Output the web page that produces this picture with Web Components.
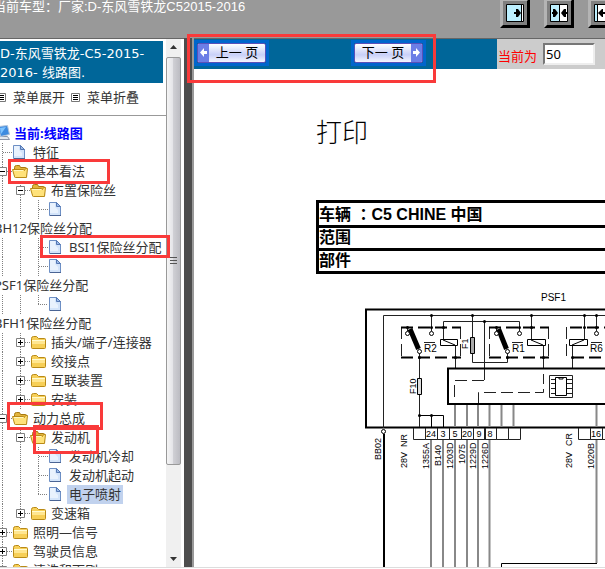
<!DOCTYPE html>
<html lang="zh-CN">
<head>
<meta charset="utf-8">
<title>线路图</title>
<style>
  html, body {
    margin: 0;
    height: 100%;
    overflow: hidden;
    background: #fff;
    font-family: "Noto Sans", "Noto Sans CJK SC", sans-serif;
    font-size: 13px;
    color: #333;
  }
</style>
</head>
<body>
<manual-app>
  <top-bar slot="top">当前车型：厂家:D-东风雪铁龙C52015-2016</top-bar>
  <side-menu slot="side">D-东风雪铁龙-C5-2015-2016- 线路图.</side-menu>
  <manual-page slot="main"></manual-page>
</manual-app>

<script>
class ManualApp extends HTMLElement {
    constructor() {
        super();
        this.attachShadow({mode: 'open'}).innerHTML = `
            <style>
              :host {
                position: relative;
                display: grid;
                grid-template: 39px minmax(0, 1fr) / 184px 10px minmax(0, 1fr);
                height: calc(100vh - 2px);
                border-bottom: 1px solid #ddd;
                overflow: hidden;
              }
              .top {
                grid-column: 1 / -1;
                min-width: 0;
              }
              .divider {
                background: #4d4d4d;
                border-right: 2px solid #999;
                margin-top: -1px;
              }
              .side, .main {
                min-width: 0;
                min-height: 0;
                overflow: hidden;
                display: grid;
              }
            </style>
            <div class="top"><slot name="top"></slot></div>
            <div class="side"><slot name="side"></slot></div>
            <div class="divider"></div>
            <div class="main"><slot name="main"></slot></div>
            <mark-box x="187" y="34" w="249" h="49"></mark-box>
            <mark-box x="8" y="159" w="102" h="25"></mark-box>
            <mark-box x="40" y="235" w="130" h="23"></mark-box>
            <mark-box x="7" y="402" w="96" h="28"></mark-box>
            <mark-box x="33" y="425" w="66" h="29"></mark-box>
        `;
    }
}

// red frame drawn over the page
class MarkBox extends HTMLElement {
    connectedCallback() {
        const get = name => this.getAttribute(name);
        this.attachShadow({mode: 'open'}).innerHTML = `
            <style>
              :host {
                position: absolute;
                left: ${get('x')}px;
                top: ${get('y')}px;
                width: ${get('w')}px;
                height: ${get('h')}px;
                box-sizing: border-box;
                border: 3px solid #f93a3a;
                pointer-events: none;
              }
            </style>
        `;
    }
}

class TopBar extends HTMLElement {
    constructor() {
        super();
        this.attachShadow({mode: 'open'}).innerHTML = `
            <style>
              :host {
                display: flex;
                justify-content: space-between;
                height: 38px;
                background: #999;
                border-bottom: 1px solid #666;
                color: #fff;
                font-family: "Liberation Sans", "Noto Sans CJK SC", sans-serif;
                overflow: hidden;
              }
              .car {
                margin-left: -7px;
                line-height: 14px;
                white-space: nowrap;
              }
              .tools {
                display: flex;
                gap: 14px;
                margin: -2px -13px 0 0;
              }
              button {
                width: 30px;
                height: 30px;
                padding: 0;
                border: 3px solid;
                border-color: #b4b4b4 #000 #000 #b4b4b4;
                background: #808080;
                display: grid;
                place-items: center;
              }
              svg { display: block; }
            </style>
            <span class="car"><slot></slot></span>
            <div class="tools">
              <button aria-label="左">
                <svg width="18" height="18"><path fill="#fff" stroke="#000" d="M.5.5h17v17H.5z"/><path fill="#bdf0ff" d="M1 1h14v16H1z"/><path stroke="#000" d="M15.500 1v16"/><path d="M8 8h2V5h2l3 4-3 4h-2v-3H8z"/></svg>
              </button>
              <button aria-label="中">
                <svg width="18" height="18"><path fill="#fff" stroke="#000" d="M.5.5h17v17H.5z"/><path fill="#bdf0ff" d="M1 1h8v16H1z"/><path stroke="#000" d="M9.500 1v16"/><path d="M2 8h1V5h2l3 4-3 4H3v-3H2zM17 8h-1V5h-2l-3 4 3 4h2v-3h1z"/></svg>
              </button>
              <button aria-label="右">
                <svg width="18" height="18"><path fill="#fff" stroke="#000" d="M.5.5h17v17H.5z"/><path fill="#bdf0ff" d="M1 1h2v16H1z"/><path stroke="#000" d="M3.500 1v16"/><path d="M4 9l4-4h1v3h2v2H9v3H8z"/></svg>
              </button>
            </div>
        `;
    }
}

const ICONS = {
    folder: `<svg width="18" height="19"><path fill="#f7cf57" stroke="#b98a17" d="M1.500 5.500q0-2 2-2h3l2 2h6q1 0 1 1v8q0 1-1 1h-12q-1 0-1-1z"/><path fill="#ffe690" d="M2 7h13v4H2z"/><path fill="#fffbd0" d="M2 7h13v1H2z"/></svg>`,
    open: `<svg width="18" height="19"><path fill="#e3b43c" stroke="#a87a10" d="M2.500 14.500v-9q0-2 2-2h3l1 2h5q1 0 1 1v8z"/><path fill="#ffe27a" stroke="#b98a17" d="M.5 7.500h11l1 1 1-2h2l-1 9h-11q-1 0-1-1z"/><path fill="#fff7c0" d="M2 8h9v1H2z"/></svg>`,
    doc: `<svg width="18" height="19"><path fill="#d3e4fa" stroke="#6d8fc4" d="M1.500 2.500h7l4 4v9h-11z"/><path fill="#fff" d="M2 3h5v4l3 3v3H2z" opacity=".5"/><path fill="#9dbce8" stroke="#5578b4" d="M8.500 2.500v4h4z"/><path stroke="#4a6494" d="M2 15.500h11"/></svg>`,
    computer: `<svg width="18" height="19"><path fill="#e4e8ee" stroke="#8b95a8" d="M3.500 14.500l2-2h8l2 3H4z"/><path fill="#3d8be0" stroke="#b7c7dc" d="M4.500 2.500l9-1 2 9-9 2z"/><path fill="#7fc4ff" d="M6 4l6-1-5 7z"/></svg>`
};

// guide cells: | line, T branch, L last branch, + closed node, - open node
const GUIDES = {
    '|': 'M8.500 0V19',
    'T': 'M8.500 0V19M9 9.500H18',
    'L': 'M8.500 0V9M8 9.500H18',
    '+': 'M8.500 0V19M9 9.500H18',
    '-': 'M8.500 0V19M9 9.500H18'
};

class TreeRow extends HTMLElement {
    connectedCallback() {
        const guides = this.getAttribute('guides') || '';
        const icon = this.getAttribute('icon');
        let cells = '';
        for (const g of guides) {
            let box = '';
            if (g === '+' || g === '-') {
                box = `<path fill="#fff" stroke="#808080" d="M4.500 5.500h8v8h-8z"/><path stroke="#000" d="M6 9.500h5${g === '+' ? 'M8.500 7v5' : ''}"/>`;
            }
            cells += `<svg width="18" height="19"><path stroke="#808080" stroke-dasharray="1 1" fill="none" d="${GUIDES[g]}"/>${box}</svg>`;
        }
        this.attachShadow({mode: 'open'}).innerHTML = `
            <style>
              :host {
                display: flex;
                height: 19px;
                line-height: 19px;
                white-space: nowrap;
              }
              svg { display: block; flex: none; }
              a {
                color: inherit;
                text-decoration: none;
                padding: 0 2px;
                margin-left: 1px;
              }
              :host([icon="computer"]) { color: #00f; font-weight: bold; }
              :host([icon="computer"]) a { margin-left: 0; }
              :host(:not([icon])) a { padding: 0; margin: 0; }
              :host([selected]) a { background: #c1d2ee; }
            </style>
            ${cells}${icon ? ICONS[icon] : ''}<a href="#"><slot></slot></a>
        `;
    }
}

const ROWS = [
    ['', 'computer', '当前:线路图'],
    ['T', 'doc', '特征'],
    ['-', 'open', '基本看法'],
    ['|-', 'open', '布置保险丝'],
    ['||T', 'doc', ''],
    ['', '', 'BH12保险丝分配'],
    ['||T', 'doc', 'BSI1保险丝分配'],
    ['||T', 'doc', ''],
    ['', '', 'PSF1保险丝分配'],
    ['||L', 'doc', ''],
    ['', '', 'BFH1保险丝分配'],
    ['|+', 'folder', '插头/端子/连接器'],
    ['|+', 'folder', '绞接点'],
    ['|+', 'folder', '互联装置'],
    ['|+', 'folder', '安装'],
    ['-', 'open', '动力总成'],
    ['|-', 'open', '发动机'],
    ['||T', 'doc', '发动机冷却'],
    ['||T', 'doc', '发动机起动'],
    ['||L', 'doc', '电子喷射', 'selected'],
    ['|+', 'folder', '变速箱'],
    ['+', 'folder', '照明—信号'],
    ['+', 'folder', '驾驶员信息'],
    ['+', 'folder', '清洗和雨刷']
];

class SideMenu extends HTMLElement {
    constructor() {
        super();
        const rows = ROWS.map(([guides, icon, label, state]) =>
            `<tree-row guides="${guides}" ${icon ? `icon="${icon}"` : ''} ${state || ''}>${label}</tree-row>`).join('');
        const list = `<svg width="9" height="9"><path fill="#fff" stroke="#777" d="M.5.5h8v8h-8z"/><path stroke="#000" d="M2 2.500h5M2 4.500h5M2 6.500h5"/></svg>`;
        this.attachShadow({mode: 'open'}).innerHTML = `
            <style>
              :host {
                display: grid;
                grid-template-columns: minmax(0, 1fr) 15px;
                padding-right: 3px;
                min-height: 0;
                overflow: hidden;
              }
              .pane {
                min-width: 0;
                overflow: hidden;
              }
              h1 {
                margin: 2px 3px 0 0;
                padding: 3px 0 1px;
                background: #069;
                color: #fff;
                font: 13px/19px "DejaVu Sans", "Noto Sans CJK SC", sans-serif;
              }
              .menu {
                display: flex;
                align-items: center;
                gap: 6px;
                margin-left: -3px;
                height: 28px;
                padding-bottom: 4px;
                border-bottom: 1px solid #999;
              }
              .menu a {
                display: flex;
                align-items: center;
                gap: 7px;
                color: inherit;
                text-decoration: none;
                line-height: 19px;
              }
              nav {
                margin: 8px 0 0 -6px;
              }
              .scroll {
                display: grid;
                grid-template-rows: 18px minmax(0, 4fr) minmax(0, 1fr);
                background: #f0f0f0;
              }
              .scroll svg { display: block; margin: 6px auto 0; }
              .thumb {
                display: grid;
                place-items: center;
                border: 1px solid #999;
                border-radius: 2px;
                background: linear-gradient(90deg, #f5f5f5, #e4e4e8 45%, #cfcfd4 50%, #bcbcc2);
              }
              .thumb svg { margin: 0; }
              .rest {
                display: flex;
                align-items: flex-end;
              }
              .rest svg { margin-bottom: 6px; }
            </style>
            <div class="pane">
              <h1><slot></slot></h1>
              <div class="menu"><a href="#">${list}菜单展开</a><a href="#">${list}菜单折叠</a></div>
              <nav>${rows}</nav>
            </div>
            <div class="scroll">
              <svg width="7" height="4"><path fill="#333" d="M0 4l3.500-4L7 4z"/></svg>
              <div class="thumb"><svg width="7" height="8"><path stroke="#555" d="M0 .5h7M0 3.500h7M0 6.500h7"/></svg></div>
              <div class="rest"><svg width="7" height="4"><path fill="#333" d="M0 0l3.500 4L7 0z"/></svg></div>
            </div>
        `;
    }
}

class PageButton extends HTMLElement {
    connectedCallback() {
        const next = this.hasAttribute('next');
        const arrow = next ? 'M2 7h3V4l4 4.500L5 13v-3H2z' : 'M9 7H6V4L2 8.500 6 13v-3h3z';
        this.attachShadow({mode: 'open'}).innerHTML = `
            <style>
              :host {
                display: block;
                border: 3px solid #06c;
              }
              button {
                display: flex;
                flex-direction: ${next ? 'row-reverse' : 'row'};
                width: 69px;
                height: 20px;
                padding: 0;
                border: 1px solid #5a50b8;
                border-radius: 2px;
                background: linear-gradient(#fff, #c9d0f8 60%, #f4f6ff);
                font: 13px/18px "Liberation Sans", "Noto Sans CJK SC", sans-serif;
                color: #000;
                overflow: hidden;
              }
              svg { background: #6c7ee6; flex: none; }
              span { flex: 1; white-space: nowrap; }
            </style>
            <button><svg width="11" height="18"><path fill="#fff" d="${arrow}"/></svg><span><slot></slot></span></button>
        `;
    }
}

class ManualPage extends HTMLElement {
    constructor() {
        super();
        this.attachShadow({mode: 'open'}).innerHTML = `
            <style>
              :host {
                display: block;
                overflow: hidden;
                color: #000;
              }
              .bar {
                display: flex;
                height: 30px;
                background: #069;
              }
              .pages {
                flex: 1;
                display: flex;
                align-items: flex-start;
                gap: 82px;
                padding-top: 1px;
              }
              .current {
                display: flex;
                align-items: center;
                gap: 6px;
                width: 108px;
                box-sizing: border-box;
                padding-left: 1px;
                background: #ccc;
              }
              label {
                color: #f00;
                line-height: 30px;
                padding-top: 3px;
              }
              input {
                width: 52px;
                height: 22px;
                box-sizing: border-box;
                padding: 0 1px;
                border: 2px solid;
                border-color: #777 #eee #eee #777;
                border-radius: 0;
                background: #fff;
                font: 13px "Noto Sans", sans-serif;
                color: #000;
              }
              article {
                margin: 42px 0 0 122px;
              }
              h2 {
                margin: 0;
                font: 300 26px/40px "Noto Sans CJK SC", sans-serif;
              }
              table {
                width: 110%;
                margin-top: 49px;
                border-collapse: collapse;
                font: bold 16px/20px "Liberation Sans", "Noto Sans CJK SC", sans-serif;
              }
              td {
                height: 20px;
                padding: 0;
                border: 3px solid #000;
                white-space: nowrap;
              }
              .colon { font-family: "Noto Sans CJK TC", sans-serif; }
              wiring-diagram { margin-top: 12px; }
            </style>
            <div class="bar">
              <div class="pages">
                <page-button>上一 页</page-button>
                <page-button next>下一 页</page-button>
              </div>
              <div class="current">
                <label for="page">当前为</label>
                <input id="page" value="50">
              </div>
            </div>
            <article>
              <h2>打印</h2>
              <table>
                <tr><td>车辆 <span class="colon" lang="zh-TW">：</span>C5 CHINE 中国</td></tr>
                <tr><td>范围</td></tr>
                <tr><td>部件</td></tr>
              </table>
              <wiring-diagram></wiring-diagram>
            </article>
        `;
    }
}

class WiringDiagram extends HTMLElement {
    constructor() {
        super();
        const dots = [[431,314],[472,314],[531,314],[584,314],[596,314],[484,320],[407,326],[431,326],[443,326],
            [496,326],[519,326],[531,326],[584,326],[596,326],[419,356],[455,356],[507,356],[543,356],[572,356],
            [419,414],[431,414]].map(([x, y]) => `<circle cx="${x}.5" cy="${y}.5" r="1.500"/>`).join('');
        const rings = [[407,332],[431,332],[419,350],[496,332],[519,332],[507,350],[596,332],[383,430]]
            .map(([x, y]) => `<circle cx="${x}.5" cy="${y}.5" r="2"/>`).join('');
        const pins = [[413,''],[425,'24'],[437,'3'],[449,'5'],[461,'20'],[473,'9'],[484,'8'],[496,''],[508,''],[578,''],[590,'16'],[602,'']]
            .map(([x, t]) => `<path class="l" fill="#fff" d="M${x}.5 427v11.500h12V427"/><text x="${x + 6}" y="436" text-anchor="middle">${t}</text>`).join('');
        const wires = [[381,459,'BB02'],[407,467,'28V'],[407,446,'NR'],[429,468,'1355A'],[441,465,'B140'],[453,468,'1203D'],
            [465,463,'1075'],[476,468,'1229D'],[488,468,'1226D'],[572,467,'28V'],[572,445,'CR'],[594,468,'1020B'],
            [416,393,'F10'],[468,348,'F1']]
            .map(([x, y, t]) => `<text transform="translate(${x} ${y}) rotate(-90)">${t}</text>`).join('');
        this.attachShadow({mode: 'open'}).innerHTML = `
            <style>
              :host { display: block; }
              svg { display: block; }
              path { fill: none; stroke: #000; }
              .l { stroke: #222; }
              .g { stroke: #888; stroke-width: 2; }
              .b { stroke-width: 2; }
              .d { stroke-dasharray: 12 5; }
              text { font: 9px "Liberation Sans", sans-serif; fill: #000; }
              .big { font-size: 10px; }
            </style>
            <svg width="289" height="283" viewBox="316 285 289 283" overflow="visible">
              <path class="b" d="M640 308.500H366V426.500H640"/>
              <path class="l" d="M640 314.500H383.500V427"/>
              <path class="b" d="M384 433V568"/>
              <path class="g" d="M431 439V568M443 439V568M455 404V426M455 439V568M467 404V426M467 439V568M478 404V426M478 439V568M489.500 404V426M489.500 439V568M501.500 404V426M513.500 404V426M596.500 404V426M596.500 439V562"/>
              <path d="M501.500 568V562.500H597M419.500 414.500H443.500V426M431.500 414V426"/>
              <path class="l" d="M431.500 314V330M419.500 352V426M407.500 326V330M443.500 338V320.500H519.500V330M455.500 344V367M472.500 314V361.500H507.500V352M484.500 320V379M496.500 326V330M531.500 314V338M543.500 344V367M584.500 314V338M572.500 344V367M596.500 314V330"/>
              <path class="l d" d="M401.500 326V356M460.500 326V356M489.500 326V356M548.500 326V356M566.500 326V356M454.500 396V379.500H484M478.500 403V391.500H543.500V373"/>
              <path class="b d" d="M401 326.500H461M401 356.500H461M489 326.500H549M489 356.500H549M570 326.500H640M572 356.500H640"/>
              <path class="b" d="M640 367.500H448V403H640"/>
              <path style="stroke-width:5" d="M410 328L418.500 348M498.500 328L506.500 348"/>
              <path style="fill:#fff" d="M440.500 338.500h17v6h-17zM527.500 338.500h18v6h-18zM569.500 338.500h18v6h-18z"/>
              <path d="M443 339l12 5M531 339l12 5M584 339l-12 5"/>
              <path style="fill:#aaa" d="M470.500 336.500h4v16h-4z"/>
              <path style="fill:#ddd" d="M417.500 377.500h4v16h-4z"/>
              <path class="l" d="M549.500 374.500h23v22h-23zM551 378.500h21M551 382.500h21M551 387.500h21M551 392.500h21"/>
              <path style="fill:#fff" d="M555.500 376.500h11v18h-11z"/>
              <path d="M559 376v2h4v-2"/>
              <path class="l" d="M424 341.500h11M512 341.500h11M591 341.500h11"/>
              <g fill="#000">${dots}</g>
              <g fill="#fff" stroke="#000">${rings}</g>
              ${pins}${wires}
              <text class="big" x="424" y="351">R2</text>
              <text class="big" x="512" y="351">R1</text>
              <text class="big" x="590" y="351">R6</text>
              <text class="big" x="541" y="300">PSF1</text>
            </svg>
        `;
    }
}

window.customElements.define('mark-box', MarkBox);
window.customElements.define('top-bar', TopBar);
window.customElements.define('tree-row', TreeRow);
window.customElements.define('side-menu', SideMenu);
window.customElements.define('page-button', PageButton);
window.customElements.define('wiring-diagram', WiringDiagram);
window.customElements.define('manual-page', ManualPage);
window.customElements.define('manual-app', ManualApp);
</script>
</body>
</html>
